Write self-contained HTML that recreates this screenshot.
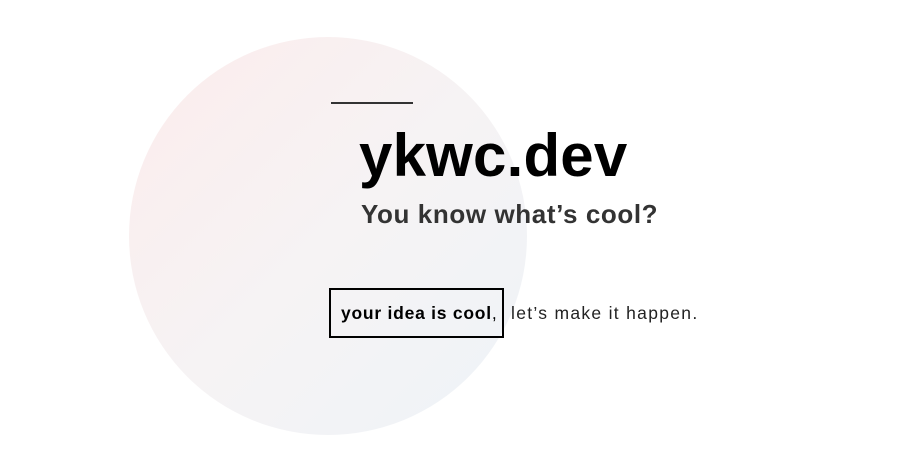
<!DOCTYPE html>
<html><head><meta charset="utf-8"><style>
html,body{margin:0;padding:0;background:#fff;width:901px;height:473px;overflow:hidden;font-family:"Liberation Sans",sans-serif;}
.c{position:absolute;left:129px;top:37px;width:398px;height:398px;border-radius:50%;background:linear-gradient(135deg,#fcecec 0%,#f6f3f4 50%,#eef3f8 100%);}
.line{position:absolute;left:331px;top:102px;width:82px;height:2px;background:#333;}
.t{position:absolute;left:359px;top:120px;font-size:60px;font-weight:bold;color:#000;letter-spacing:0.2px;line-height:72px;white-space:nowrap;}
.s{position:absolute;left:361px;top:197px;font-size:26px;font-weight:bold;color:#333;letter-spacing:0.6px;line-height:34px;white-space:nowrap;}
.box{position:absolute;left:329px;top:288px;width:171px;height:46px;border:2px solid #000;}
.b{position:absolute;left:341px;top:302px;font-size:17.5px;font-weight:bold;color:#000;line-height:22px;white-space:nowrap;letter-spacing:0.75px;}
.b span{font-weight:normal}
.r{position:absolute;left:511px;top:302px;font-size:17.5px;color:#222;line-height:22px;white-space:nowrap;letter-spacing:1.3px;}
</style></head><body>
<div class="c"></div>
<div class="line"></div>
<div class="t">ykwc.dev</div>
<div class="s">You know what’s cool?</div>
<div class="box"></div>
<div class="b">your idea is cool<span>,</span></div>
<div class="r">let’s make it happen.</div>
</body></html>
